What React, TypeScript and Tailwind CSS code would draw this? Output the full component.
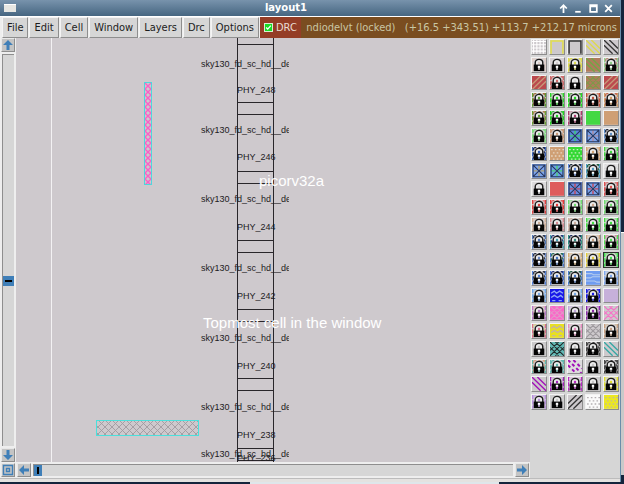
import React from "react";
import { clsx } from "clsx";

type Kind =
  | "lock" | "solid" | "grid" | "frame" | "back" | "fwd" | "cross" | "xbox" | "dots" | "waves" | "rings" | "dashes";
type Swatch = [kind: Kind, a: string, b?: string];

const K = "#333333";
const N = "#cdc9cc";

const swatches: Swatch[] = [
  ["grid", "#ffffff"], ["frame", "#e2de4a"], ["frame", K], ["back", "#ded94c"], ["back", K],
  ["lock", "#e0cfc8"], ["lock", "#d6cfd2"], ["lock", "#e0dc50"], ["back", "#6fa845", "#b07c5c"], ["lock", "#8fd08a", "#b98a72"],
  ["fwd", "#c79a78", "#bb4a4e"], ["lock", "#cf6a6a"], ["lock", "#dddddd"], ["cross", "#7d9a48", "#b07c5c"], ["fwd", "#c79a78", "#bb4a4e"],
  ["lock", "#5d9a30", "#a0703c"], ["lock", "#29d829", "#7ad070"], ["lock", "#22dd22", "#60a050"], ["lock", "#c0503c", "#d08a70"], ["lock", "#d09a60", "#c86a50"],
  ["lock", "#6aa030", "#b08050"], ["lock", "#20d820", "#40c040"], ["lock", "#b03a70", "#d0a0b0"], ["solid", "#43d843"], ["solid", "#cf9f74"],
  ["lock", "#80dd80"], ["lock", "#c99a78"], ["xbox", "#3ad068", "#5b86dc"], ["xbox", "#b08a9a", "#7ba4ec"], ["lock", "#5f90c8", "#202838"],
  ["lock", "#3a62b8", "#1c2a50"], ["dots", "#e6d6c4", "#cf9f74"], ["dots", "#c8f0c0", "#34d834"], ["lock", "#d2a474", "#e0b890"], ["lock", "#40d840", "#90e090"],
  ["xbox", "#b0a070", "#7ba4ec"], ["xbox", "#50d070", "#6aa0e8"], ["lock", "#5b86dc", "#203040"], ["lock", "#4a9ac0", "#206040"], ["lock", "#e4e4e4"],
  ["lock", "#dedede"], ["solid", "#de5c5c"], ["xbox", "#c84858", "#6c8ce0"], ["xbox", "#c84858", "#7ba4ec"], ["lock", "#e05050", "#d08080"],
  ["lock", "#e04040", "#e88080"], ["lock", "#e83838", "#e06060"], ["lock", "#70dc70", "#a0e0a0"], ["lock", "#d0a890", "#d8c0b0"], ["lock", "#70dc70", "#90e090"],
  ["lock", "#d0b098", "#dcc0b0"], ["lock", "#d88890", "#e0b0b0"], ["lock", "#d0b0a0"], ["lock", "#40e040", "#80e080"], ["lock", "#40dd40", "#90e890"],
  ["lock", "#5078b8", "#303a50"], ["lock", "#40a0b0", "#283878"], ["lock", "#309080", "#203060"], ["lock", "#c8a080", "#e0c8b0"], ["lock", "#50e050", "#d090a0"],
  ["lock", "#6a8ac8", "#283040"], ["lock", "#4878c8", "#287058"], ["lock", "#d8ae70", "#e0c8a8"], ["lock", "#e0cc38", "#dccf90"], ["lock", "#40e050", "#80dd80"],
  ["lock", "#5080d8", "#303848"], ["lock", "#4878d8", "#283878"], ["lock", "#4878c8", "#286050"], ["waves", "#b4cbee", "#6f9cf0"], ["lock", "#80a8f0", "#b0c8f0"],
  ["lock", "#74a8e8", "#90c0f0"], ["rings", "#8fa8f4", "#1818e8"], ["lock", "#74a8e8", "#a0c8f0"], ["lock", "#1818e8", "#3838d8"], ["solid", "#c6b0da"],
  ["lock", "#b878c8", "#dcb0b8"], ["cross", "#e298c8", "#fa68c8"], ["lock", "#c0a8dc", "#d0c0e0"], ["lock", "#8828a8", "#c080d0"], ["cross", "#f870c8"],
  ["lock", "#d87088", "#d8d090"], ["rings", "#c4b4a4", "#e8e020"], ["lock", "#e88cc0", "#e0c0d0"], ["cross", "#9c989c"], ["lock", "#c8a080", "#d0c0a8"],
  ["lock", "#c8c8c8"], ["cross", "#202828", "#62b8b4"], ["lock", "#c8c8c8"], ["lock", "#484848"], ["back", "#34a8a4"],
  ["lock", "#68b8a8", "#d8a080"], ["lock", "#60b8b0"], ["dashes", "#a010b8", "#dddddd"], ["lock", "#c8c8c8"], ["lock", "#484848"],
  ["back", "#a010b8"], ["lock", "#a020b8", "#d0b0d8"], ["lock", "#b828c0", "#e0c0e0"], ["lock", "#c8c8c8"], ["lock", "#e0e030", "#e0e090"],
  ["lock", "#b890dc", "#c8a8e8"], ["lock", "#cccccc"], ["fwd", K], ["dots", "#b4b0b3", "#fafafa"], ["dots", "#c0baa0", "#ece820"],
];

const BACK = "M0 5 8 13M0 0 13 13M5 0 13 8";
const FWD = "M8 0 0 8M13 0 0 13M13 5 5 13";

function SwatchIcon({ kind, a, b }: { kind: Kind; a: string; b?: string }) {
  const base = kind === "lock" ? "#d6d3d5" : kind === "solid" ? a : b ?? N;
  return (
    <svg viewBox="0 0 13 13" className="block size-full" preserveAspectRatio="none" aria-hidden="true">
      <rect width="13" height="13" fill={base} />
      {kind === "grid" && <path d="M1.5 0V13M4.5 0V13M7.5 0V13M10.5 0V13M0 1.5H13M0 4.5H13M0 7.5H13M0 10.5H13" stroke={a} />}
      {kind === "frame" && <path d="M1 13V1H12V13" stroke={a} strokeWidth="1.4" fill="none" />}
      {kind === "back" && <path d={BACK} stroke={a} strokeWidth="1.2" />}
      {kind === "fwd" && <path d={FWD} stroke={a} strokeWidth="1.2" />}
      {kind === "cross" && <path d={BACK + FWD} stroke={a} />}
      {kind === "dashes" && <path d={BACK} stroke={a} strokeWidth="1.8" strokeDasharray="3 2.4" />}
      {kind === "xbox" && (
        <>
          <path d="M6.5 1.5V5M6.5 8V11.5M1.5 6.5H5M8 6.5H11.5" stroke={a} strokeWidth="1.3" />
          <path d="M1 1H12V12H1ZM1 1 12 12M12 1 1 12" stroke="#26365c" fill="none" />
        </>
      )}
      {kind === "dots" && (
        <>
          <path d="M1 2.5H13M1 8.5H13" stroke={a} strokeWidth="1.3" strokeDasharray="1.5 2" />
          <path d="M2.7 5.5H13M2.7 11.5H13" stroke={a} strokeWidth="1.3" strokeDasharray="1.5 2" />
        </>
      )}
      {kind === "waves" && <path d="M0 2.5H5L7 3.5H13M0 6.5H4L6 5.5H13M0 9.5H8L10 10.5H13" stroke={a} fill="none" />}
      {kind === "rings" && (
        <path d="M1 4 4 2 6 4 9 2 12 4M1 8 4 6 7 8 10 6 12 8M2 11H5M8 11H11" stroke={a} fill="none" strokeWidth="1.3" />
      )}
      {kind === "lock" && (
        <>
          <path d="M.5 0V13M12.5 0V13" stroke={a} strokeWidth="1.6" strokeDasharray="4 1" />
          <path d="M1.6 1V13M11.4 0V12M2 .6H11" stroke={b ?? a} strokeWidth="1.2" strokeDasharray="2 2" />
          <path d="M3 6.5V4.6C3 .2 10 .2 10 4.6V6.5" fill="#ececec" stroke="#1c1c1c" strokeWidth="1.3" />
          <rect x="5.5" y="3.6" width="2" height="2.4" fill={a} />
          <rect x="1.6" y="6.2" width="9.8" height="6.2" fill="#050505" />
          <path d="M5.4 7.4H7.6V9.4H7V11.2H6V9.4H5.4Z" fill="#ffffff" />
          <path d="M6 9H7V11H6Z" fill={a} />
        </>
      )}
    </svg>
  );
}

function Palette() {
  return (
    <aside aria-label="Layers" className="w-[90px] shrink-0 bg-[#d6d6d6]">
      <div className="grid h-[373px] grid-cols-5">
        {swatches.map(([kind, a, b], i) => (
          <button
            key={i}
            type="button"
            aria-label={`Layer ${i + 1}`}
            className={clsx(
              "m-px min-h-0 border bg-[#d6d6d6]",
              i === 64 ? "border-[#303030]" : "border-t-[#f2f2f2] border-r-[#8c8c8c] border-b-[#8c8c8c] border-l-[#f2f2f2]",
            )}
          >
            <SwatchIcon kind={kind} a={a} b={b} />
          </button>
        ))}
      </div>
    </aside>
  );
}

const arrows = {
  up: "M6 1 11 6H7.5V11H4.5V6H1Z",
  down: "M6 11 11 6H7.5V1H4.5V6H1Z",
  left: "M1 6 6 1V4.5H11V7.5H6V11Z",
  right: "M11 6 6 1V4.5H1V7.5H6V11Z",
};

function ScrollButton({ dir }: { dir: keyof typeof arrows | "fit" }) {
  return (
    <button
      type="button"
      aria-label={dir}
      className="size-[14px] shrink-0 border border-t-[#e8e8e8] border-r-[#8e8e8e] border-b-[#8e8e8e] border-l-[#e8e8e8] bg-[#c4c4c4]"
    >
      <svg viewBox="0 0 12 12" className="block size-full" aria-hidden="true">
        {dir === "fit" ? (
          <path d="M1.5 1.5H10.5V10.5H1.5ZM4.5 4.5H7.5V7.5H4.5Z" fill="none" stroke="#3f7fb8" strokeWidth="1.4" />
        ) : (
          <path d={arrows[dir]} fill="#3f7fb8" />
        )}
      </svg>
    </button>
  );
}

const rails = [44, 102, 114, 171, 183, 240, 252, 309, 321, 378, 390, 448, 460];
const cellNames = [67, 133, 202, 271, 341, 410, 457];
const instances = [
  ["PHY_248", 93], ["PHY_246", 160], ["PHY_244", 230], ["PHY_242", 299], ["PHY_240", 369], ["PHY_238", 438], ["PHY_236", 461],
] as const;

function Canvas() {
  return (
    <div className="min-h-0 min-w-0 flex-1 overflow-hidden bg-[#cec9cd]">
      <svg width="514" height="424" viewBox="16 38 514 424" className="block font-['Liberation_Sans',Arial,sans-serif]">
        <defs>
          <pattern id="mesh" width="7" height="7" patternUnits="userSpaceOnUse">
            <path d="M0 0 7 7M7 0 0 7" stroke="#a09b9f" strokeWidth=".9" />
          </pattern>
          <pattern id="pinkMesh" x="145" y="83" width="6" height="6" patternUnits="userSpaceOnUse">
            <path d="M0 0 6 6M6 0 0 6" stroke="#fa5fc6" strokeWidth="1.4" />
          </pattern>
          <clipPath id="nameClip">
            <rect x="200" y="38" width="89" height="424" />
          </clipPath>
        </defs>
        <path d="M51.5 38V462" stroke="#f3f1f3" />
        <rect x="144.5" y="82.5" width="7" height="102" fill="url(#pinkMesh)" stroke="#4fd6dc" />
        <rect x="96.5" y="420.5" width="102" height="15" fill="url(#mesh)" stroke="#4be0dc" />
        <path d="M237.5 38V462M273.5 38V462" stroke="#29262a" />
        {rails.map((y) => (
          <path key={y} d={`M237 ${y + 0.5}H274`} stroke="#29262a" />
        ))}
        <g fontSize="9" fill="#1d1b1d">
          <g clipPath="url(#nameClip)">
            {cellNames.map((y) => (
              <text key={y} x="201" y={y}>sky130_fd_sc_hd__decap_3</text>
            ))}
          </g>
          {instances.map(([name, y]) => (
            <text key={name} x="237" y={y}>{name}</text>
          ))}
        </g>
        <g fontSize="15" fill="#ffffff">
          <text x="259" y="186">picorv32a</text>
          <text x="203" y="328">Topmost cell in the window</text>
        </g>
      </svg>
    </div>
  );
}

const menus = ["File", "Edit", "Cell", "Window", "Layers", "Drc", "Options"];

const windowButtons = [
  ["Shade", "M5 9V2M2 5 5 2 8 5"],
  ["Minimize", "M2 8H7"],
  ["Maximize", "M2 2H8V8H2ZM2 3H8"],
  ["Close", "M2 2 8 8M8 2 2 8"],
];

export default function App() {
  return (
    <div className="flex h-screen flex-col overflow-hidden bg-[#14243c] font-['DejaVu_Sans_Condensed','DejaVu_Sans',sans-serif]">
      <div className="flex min-h-0 flex-1">
        <div className="flex min-w-0 flex-1 flex-col border-r border-[#6b8daa] bg-[#d6d6d6]">
          <header className="grid h-4 shrink-0 grid-cols-[1fr_auto_1fr] items-center bg-linear-to-b from-[#7893ac] to-[#466681] px-1 text-white">
            <span className="h-2 w-3 border-t border-white bg-[#e6e6e2]" />
            <h1 className="pr-12 font-['DejaVu_Sans',sans-serif] text-[10px] leading-4 font-bold">layout1</h1>
            <div className="flex justify-end gap-1 pr-0.5">
              {windowButtons.map(([name, d]) => (
                <button key={name} type="button" aria-label={name} className="size-[11px]">
                  <svg viewBox="0 0 10 10" className="block size-full">
                    <path d={d} fill="none" stroke="#ffffff" strokeWidth="1.6" />
                  </svg>
                </button>
              ))}
            </div>
          </header>
          <nav className="flex h-[22px] shrink-0 gap-px border-t border-white bg-[#eeeeee] pl-0.5 text-[11px] leading-4 text-[#1c1c1c]">
            {menus.map((m) => (
              <button
                key={m}
                type="button"
                className="border border-t-[#f4f4f4] border-r-[#8e8e8e] border-b-[#8e8e8e] border-l-[#f4f4f4] bg-[#d6d6d6] px-1"
              >
                {m}
              </button>
            ))}
            <div className="flex min-w-0 flex-1">
              <label className="flex shrink-0 items-center gap-[3px] bg-[#943d26] px-1 text-[#e8dcd4]">
                <input type="checkbox" defaultChecked className="peer sr-only" />
                <svg viewBox="0 0 9 9" className="size-[9px] border border-[#d8f0d0] bg-[#18dc28]" aria-hidden="true">
                  <path d="M1.5 4.5 3.5 6.5 7.5 2" fill="none" stroke="#ffffff" strokeWidth="1.6" />
                </svg>
                DRC
              </label>
              <output className="flex min-w-0 flex-1 items-center justify-end overflow-hidden bg-[#7a4d20] pr-[3px] whitespace-pre text-[#c9c6a4]">
                {"ndiodelvt (locked)   (+16.5 +343.51) +113.7 +212.17 microns"}
              </output>
            </div>
          </nav>
          <div className="flex min-h-0 flex-1">
            <div className="flex min-w-0 flex-1 flex-col">
              <div className="flex min-h-0 flex-1">
                <div className="flex w-4 shrink-0 flex-col items-center gap-0.5 bg-[#eeeeee]">
                  <ScrollButton dir="up" />
                  <div className="flex w-3 flex-1 flex-col items-center justify-center border-t border-l border-[#8e8e8e] bg-[#d6d6d6]">
                    <div className="mt-15 flex h-2.5 w-full items-center bg-[#3f7fb8] px-0.5">
                      <span className="h-0.5 w-full bg-black" />
                    </div>
                  </div>
                  <ScrollButton dir="down" />
                </div>
                <Canvas />
              </div>
              <div className="flex h-4 shrink-0 items-center gap-0.5 bg-[#eeeeee] px-px">
                <ScrollButton dir="fit" />
                <ScrollButton dir="left" />
                <div className="flex h-3 flex-1 border-t border-l border-[#8e8e8e] bg-[#d6d6d6]">
                  <span className="flex w-2 justify-center bg-[#3f7fb8] py-0.5">
                    <span className="w-0.5 bg-black" />
                  </span>
                </div>
                <ScrollButton dir="right" />
              </div>
            </div>
            <Palette />
          </div>
          <div className="h-1 shrink-0 border-t border-[#bcbcbc] bg-[#e4e2e0]" />
        </div>
        <div className="flex w-[3px] shrink-0 flex-col">
          <div className="h-[232px] bg-[#14243c]" />
          <div className="h-[243px] border-t border-white bg-[#c9c9c9]" />
        </div>
      </div>
      <div className="flex h-0.5 shrink-0">
        <div className="w-2/5 bg-[#14243c]" />
        <div className="w-2/5 bg-[#dfe6ea]" />
      </div>
    </div>
  );
}
